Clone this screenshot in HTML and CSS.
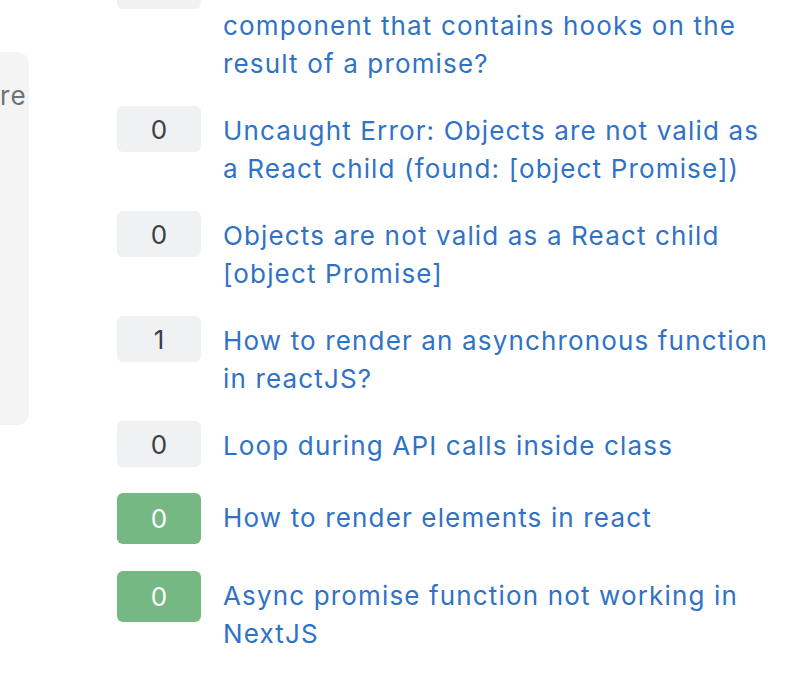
FILE: index.html
```html
<!DOCTYPE html>
<html lang="en">
<head>
<meta charset="utf-8">
<title>Related questions</title>
<link rel="stylesheet" href="styles.css">
</head>
<body>
<div class="page">
  <aside class="side-panel">
    <p class="side-text">re</p>
  </aside>
  <ul class="related">
    <li class="related-item">
      <span class="votes">0</span>
      <a class="question" href="#">How can I make a React functional component that contains hooks on the result of a promise?</a>
    </li>
    <li class="related-item">
      <span class="votes">0</span>
      <a class="question" href="#">Uncaught Error: Objects are not valid as a React child (found: [object Promise])</a>
    </li>
    <li class="related-item">
      <span class="votes">0</span>
      <a class="question" href="#">Objects are not valid as a React child [object Promise]</a>
    </li>
    <li class="related-item">
      <span class="votes">1</span>
      <a class="question" href="#">How to render an asynchronous function in reactJS?</a>
    </li>
    <li class="related-item single">
      <span class="votes">0</span>
      <a class="question" href="#">Loop during API calls inside class</a>
    </li>
    <li class="related-item accepted">
      <span class="votes">0</span>
      <a class="question" href="#">How to render elements in react</a>
    </li>
    <li class="related-item accepted">
      <span class="votes">0</span>
      <a class="question" href="#">Async promise function not working in NextJS</a>
    </li>
  </ul>
</div>
</body>
</html>
```

FILE: styles.css
```css
html, body {
  margin: 0;
  padding: 0;
  background: #ffffff;
  overflow: hidden;
}

body {
  width: 788px;
  height: 698px;
  font-family: Inter, "Liberation Sans", Arial, sans-serif;
}

.page {
  display: flex;
  align-items: flex-start;
}

.side-panel {
  flex: 0 0 29px;
  height: 373px;
  margin-top: 52px;
  background: #f4f4f4;
  border-radius: 0 12px 12px 0;
  overflow: hidden;
}

.side-text {
  margin: 30px 0 0 0;
  font-size: 26px;
  line-height: 28px;
  letter-spacing: 1.15px;
  color: #6a737c;
  white-space: nowrap;
}

.related {
  list-style: none;
  margin: -37px 0 0 88px;
  padding: 0;
  width: 660px;
}

.related-item {
  display: flex;
  align-items: flex-start;
  gap: 22px;
  margin-bottom: 23px;
}

.votes {
  flex: 0 0 84px;
  height: 46px;
  border-radius: 6px;
  background: #f0f1f2;
  color: #3b4045;
  font-size: 26px;
  line-height: 47px;
  text-align: center;
}

.accepted .votes {
  height: 51px;
  line-height: 52px;
  background: #76b884;
  color: #ffffff;
}

.single {
  margin-bottom: 26px;
}

.accepted {
  margin-bottom: 27px;
}

.question {
  flex: 0 0 547px;
  padding-top: 6px;
  font-size: 26px;
  line-height: 38px;
  letter-spacing: 1.15px;
  color: #3072c6;
  text-decoration: none;
}
```
